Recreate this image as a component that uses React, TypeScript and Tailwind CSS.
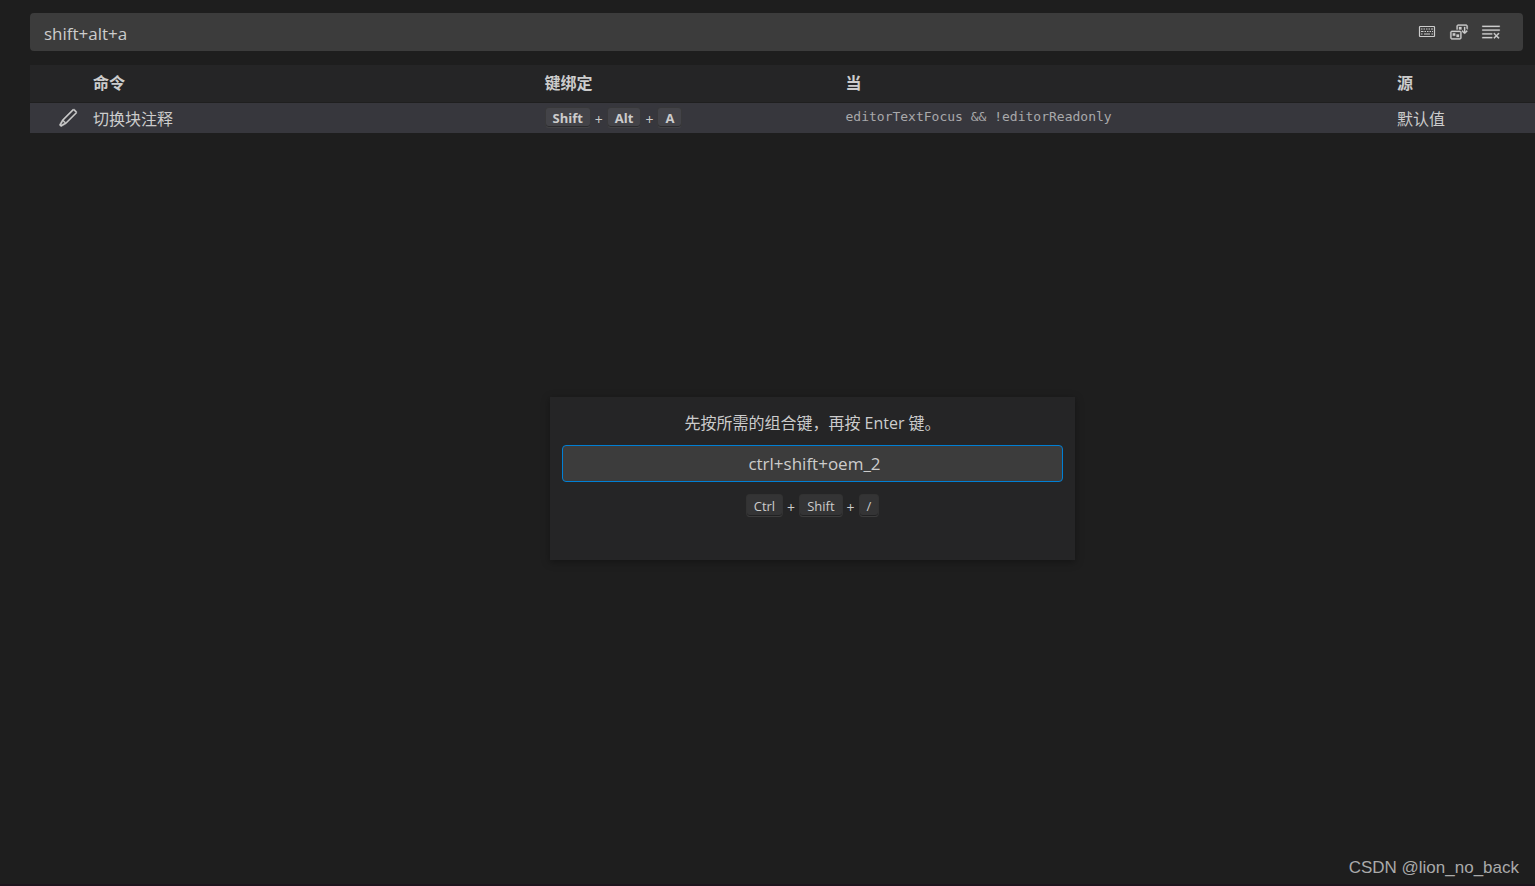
import { Fragment, useState } from 'react';
import { VscClearAll, VscEdit, VscSortPrecedence } from 'react-icons/vsc';

function KeyboardIcon({ className }: { className?: string }) {
  return (
    <svg viewBox="0 0 20 20" fill="none" stroke="currentColor" className={className} aria-hidden="true">
      <rect x="2.5" y="4.5" width="15" height="10" rx="0.5" strokeWidth="1.2" />
      <path d="M4 7h1.5M6.5 7H8M9 7h1.5M11.5 7H13M14 7h2M4 9.5h2.5M7.5 9.5H9M10 9.5h1.5M12.5 9.5H14M15 9.5h1M4 12h1.5M7 12h6M14.5 12H16" strokeWidth="1.2" />
    </svg>
  );
}

const actions = [
  { label: 'Record Keys', Icon: KeyboardIcon, iconClass: 'size-5' },
  { label: 'Sort by Precedence', Icon: VscSortPrecedence, iconClass: 'size-5 stroke-current stroke-[0.2]' },
  { label: 'Clear Keybindings Search Input', Icon: VscClearAll, iconClass: 'size-5 stroke-current stroke-[0.2]' },
];

function Keybinding({ keys, keyClass }: { keys: string[]; keyClass: string }) {
  return (
    <span className="flex items-center">
      {keys.map((key, i) => (
        <Fragment key={key}>
          {i > 0 && <span className="w-4 pt-1 text-center text-sm leading-4">+</span>}
          <kbd
            className={`rounded-[4px] border border-[#333333]/60 border-b-[#444444]/60 bg-[#808080]/17 text-center font-[inherit] text-[13px] shadow-[inset_0_-1px_0_rgba(0,0,0,0.36)] ${keyClass}`}
          >
            {key}
          </kbd>
        </Fragment>
      ))}
    </span>
  );
}

// Search box with its toolbar on the right
function SearchBar() {
  const [query, setQuery] = useState('shift+alt+a');
  return (
    <div className="mr-3 flex h-[38px] items-center rounded-sm bg-[#3c3c3c] pr-[22px]">
      <input
        aria-label="Search keybindings"
        className="h-full min-w-0 flex-1 bg-transparent px-3.5 pt-0.5 text-[17px] outline-none"
        value={query}
        onChange={(e) => setQuery(e.target.value)}
      />
      <div className="flex gap-3">
        {actions.map(({ label, Icon, iconClass }) => (
          <button key={label} type="button" aria-label={label}>
            <Icon className={iconClass} />
          </button>
        ))}
      </div>
    </div>
  );
}

function KeybindingsTable() {
  return (
    <table className="mt-3.5 w-full table-fixed text-left text-base">
      <colgroup>
        <col className="w-[53px]" />
        <col className="w-[30%]" />
        <col className="w-[20%]" />
        <col />
        <col className="w-[148px]" />
      </colgroup>
      <thead>
        <tr className="h-[37px] border-b border-[#1f1f1f] bg-[#252526]">
          <td />
          <th className="px-2.5 font-bold">命令</th>
          <th className="px-2.5 font-bold">键绑定</th>
          <th className="px-2.5 font-bold">当</th>
          <th className="px-2.5 font-bold">源</th>
        </tr>
      </thead>
      <tbody>
        <tr className="h-[31px] bg-[#37373d]">
          <td className="pl-7">
            <button type="button" aria-label="Change Keybinding" className="block">
              <VscEdit className="size-5 stroke-current stroke-[0.3]" />
            </button>
          </td>
          <td className="px-2.5 pt-0.5">切换块注释</td>
          <td className="px-2.5">
            <Keybinding keys={['Shift', 'Alt', 'A']} keyClass="h-[21px] px-[7px] leading-5 font-bold" />
          </td>
          <td className="px-2.5 pb-0.5 font-['DejaVu_Sans_Mono',monospace] text-[13px] text-[#a9a9ab]">
            editorTextFocus &amp;&amp; !editorReadonly
          </td>
          <td className="px-2.5 pt-0.5">默认值</td>
        </tr>
      </tbody>
    </table>
  );
}

// Floating widget that records the new key combination
function DefineKeybinding() {
  const [chord, setChord] = useState('ctrl+shift+oem_2');
  return (
    <div className="absolute inset-x-0 top-[397px] flex justify-center pl-[90px]">
      <div
        role="dialog"
        aria-labelledby="define-label"
        className="flex w-[525px] flex-col items-center bg-[#252526] px-3 pt-3 pb-[43px] shadow-[0_2px_8px_rgba(0,0,0,0.36)]"
      >
        <label id="define-label" htmlFor="define-input" className="pt-0.5 text-base leading-6">
          先按所需的组合键，再按 Enter 键。
        </label>
        <input
          id="define-input"
          className="mt-2.5 mb-3 h-[37px] w-full rounded-sm border border-[#007fd4] bg-[#3c3c3c] pl-1 text-center text-[17px] outline-none"
          value={chord}
          onChange={(e) => setChord(e.target.value)}
        />
        <Keybinding keys={['Ctrl', 'Shift', '/']} keyClass="h-[23px] px-[7px] leading-[22px]" />
      </div>
    </div>
  );
}

export default function App() {
  return (
    <div className="relative min-h-screen overflow-hidden border-b-2 border-[#1d151d] bg-[#1e1e1e] pt-[13px] pl-[30px] font-['Open_Sans','Noto_Sans_CJK_SC',sans-serif] text-[#cccccc]">
      <SearchBar />
      <KeybindingsTable />
      <DefineKeybinding />
      <p className="absolute right-4 bottom-1.5 font-['Liberation_Sans',sans-serif] text-[17px] leading-5 text-[#aaaaaa]">
        CSDN @lion_no_back
      </p>
    </div>
  );
}
